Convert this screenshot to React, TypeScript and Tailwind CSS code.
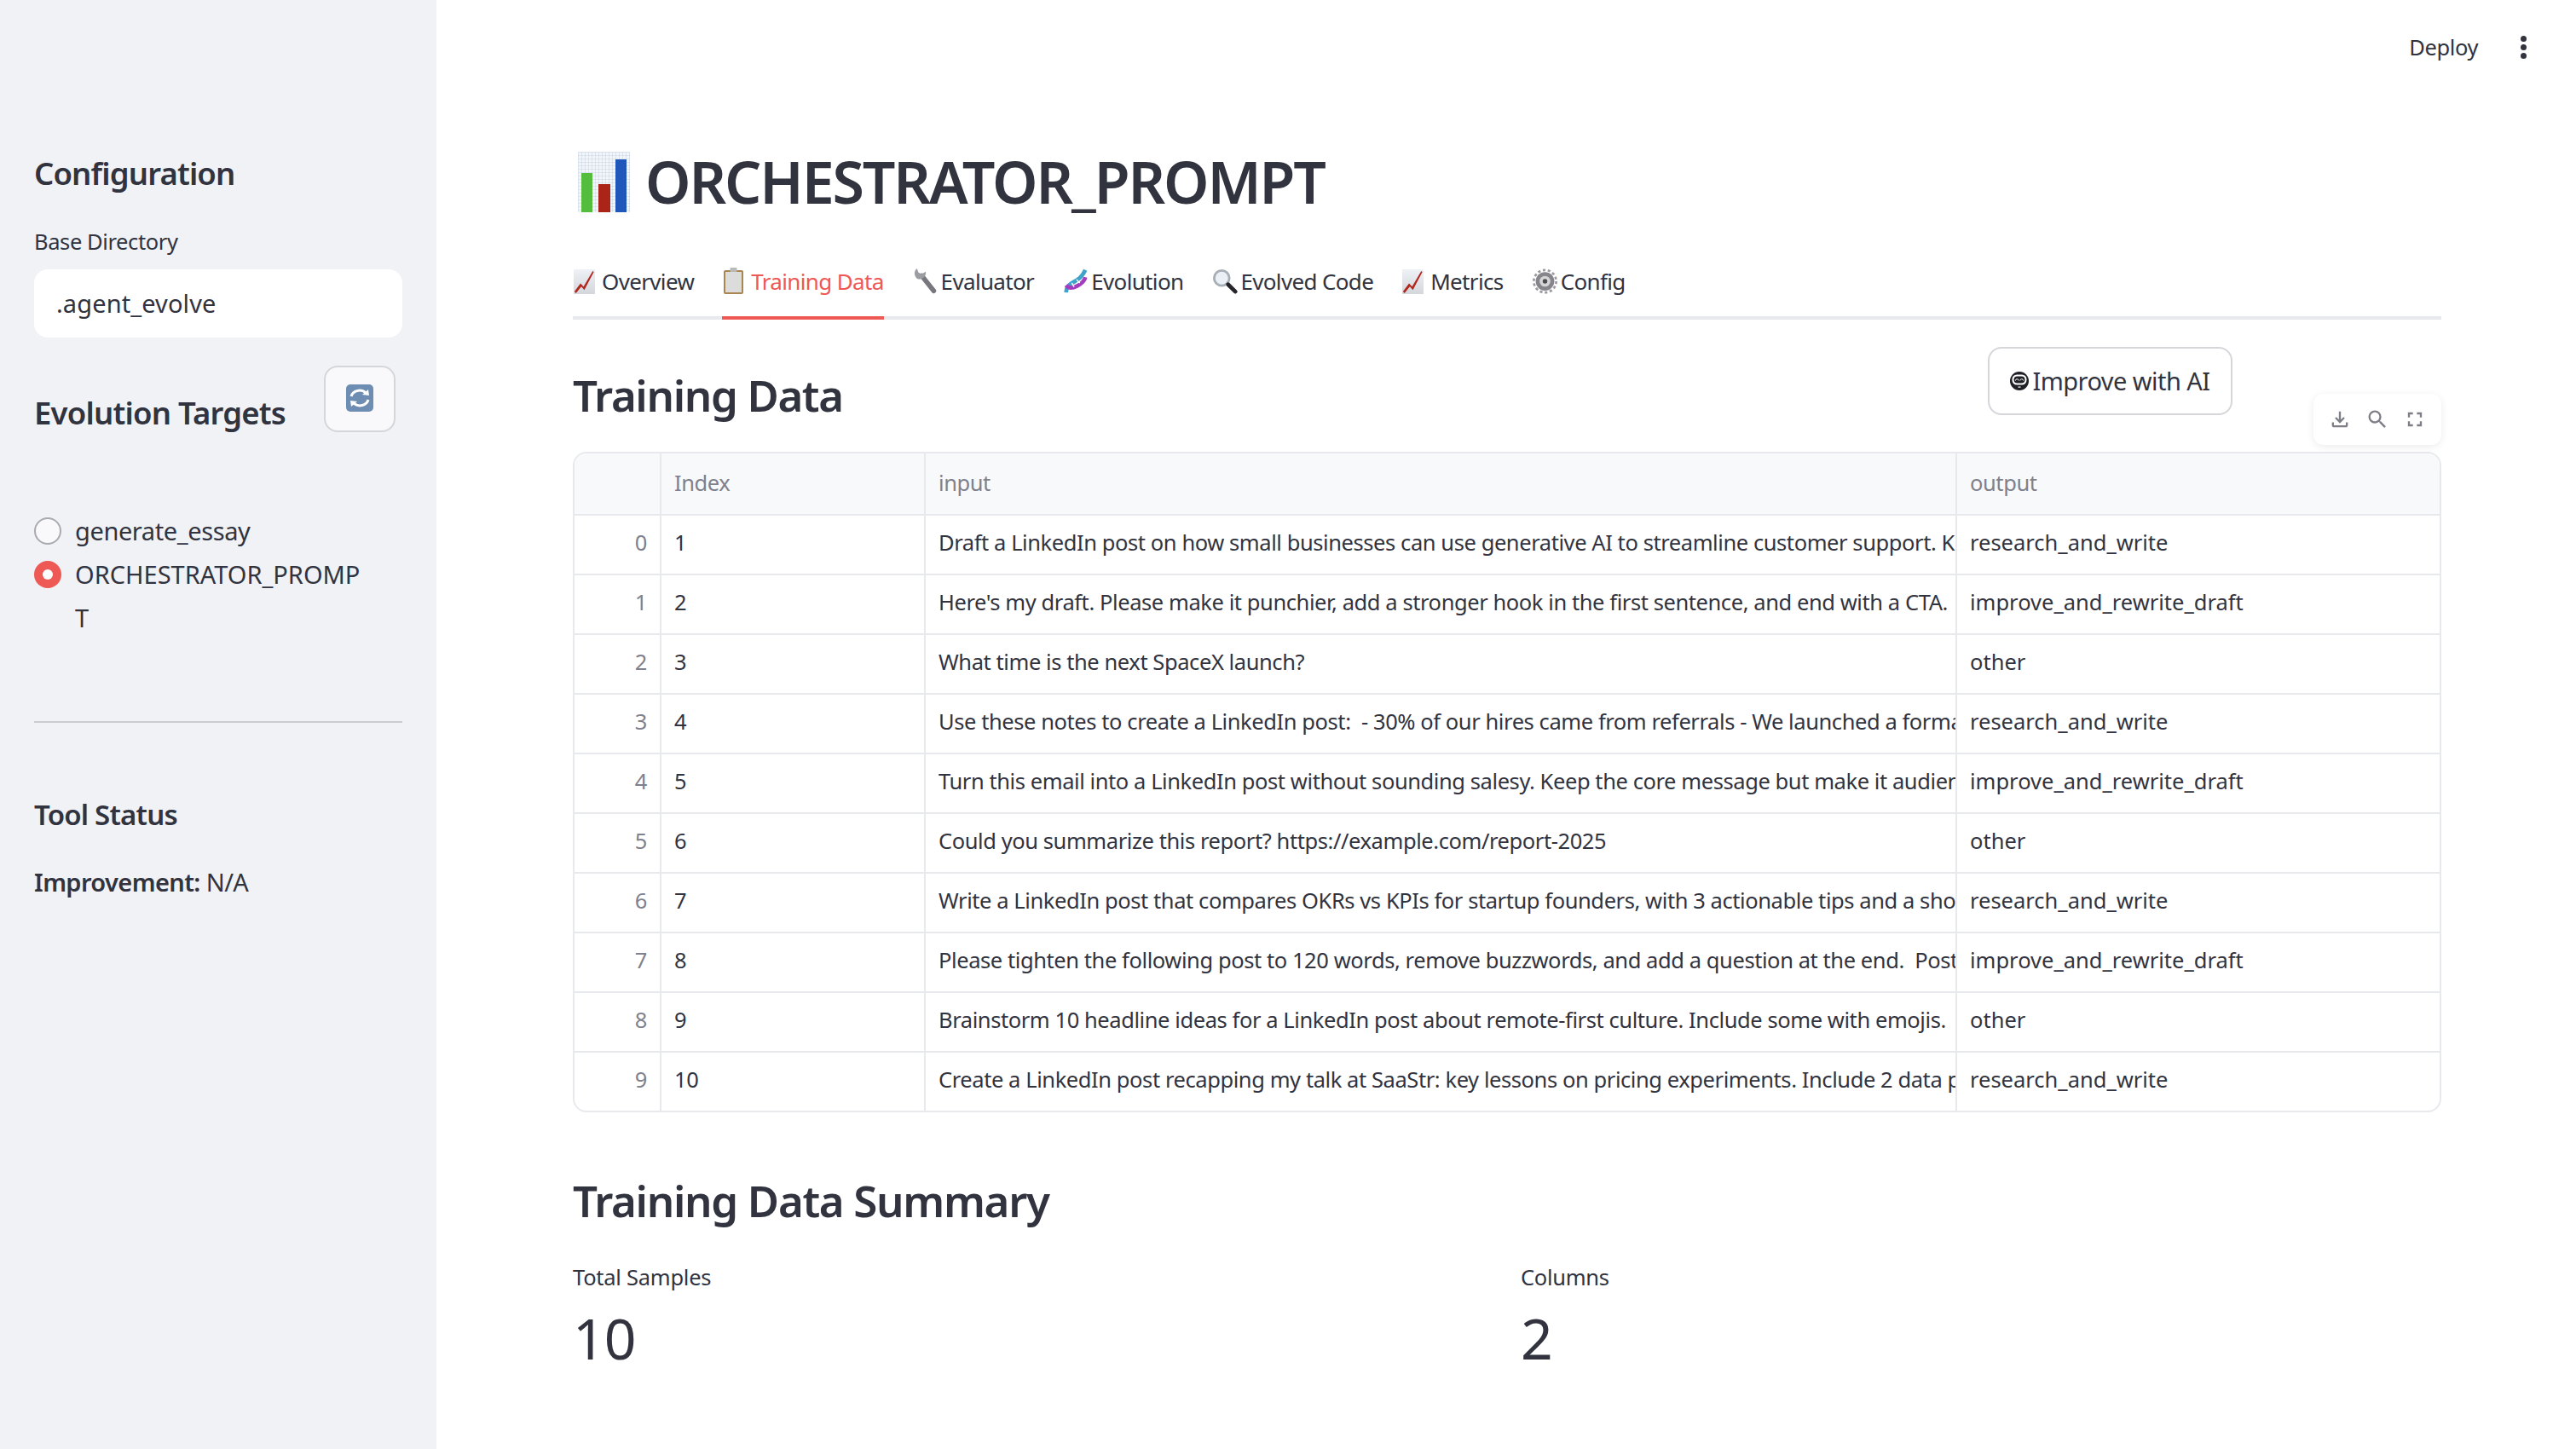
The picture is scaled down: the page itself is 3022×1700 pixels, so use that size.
import React from "react";
import { MdOutlineFileDownload, MdSearch, MdFullscreen } from "react-icons/md";

const Chart = ({ c = "w-[25px] h-[29px]" }: { c?: string }) => (
  <svg viewBox="0 0 28 30" className={c} preserveAspectRatio="none">
    <defs>
      <linearGradient id="cg" x1="0" y1="0" x2="0" y2="1">
        <stop offset="0" stopColor="#eef1f5" />
        <stop offset="1" stopColor="#d3d6da" />
      </linearGradient>
    </defs>
    <rect width="28" height="30" fill="url(#cg)" />
    <path d="M1 27 L9 17 L13 21 L25 2 L26.5 3 L14 25 L10 21 L3 29 Z" fill="#b3261e" />
  </svg>
);
const Clip = () => (
  <svg viewBox="0 0 24 32" className="w-[25px] h-[32px]">
    <rect x="0.5" y="3" width="23" height="28" rx="2" fill="#a9854f" />
    <rect x="2.5" y="5" width="19" height="24" fill="#dcdcdc" />
    <rect x="8" y="0" width="8" height="5" rx="1" fill="#b9b9b9" />
  </svg>
);
const Wrench = () => (
  <svg viewBox="0 0 30 34" className="w-[30px] h-[32px]">
    <path d="M10 10 L25 29" stroke="#77777d" strokeWidth="6" strokeLinecap="round" />
    <path d="M4 1 A8 8 0 0 0 5 14 A8 8 0 0 0 15 5 L10 8 L6 6 Z" fill="#9c9ca3" />
  </svg>
);
const Dna = () => (
  <svg viewBox="0 0 30 34" className="w-[30px] h-[32px]">
    <path d="M3 31 C4 15 18 22 27 3" stroke="#3fa2c8" strokeWidth="5" fill="none" />
    <path d="M3 22 C9 30 25 20 27 12" stroke="#a53bc0" strokeWidth="5" fill="none" />
    <path d="M10 19 L13 24 M16 15 L20 19" stroke="#fff" strokeWidth="1.5" />
  </svg>
);
const Glass = () => (
  <svg viewBox="0 0 32 32" className="w-[30px] h-[30px]">
    <circle cx="12" cy="12" r="9.5" fill="#eaf0f6" stroke="#a8aeb5" strokeWidth="3" />
    <path d="M20 20 L29 29" stroke="#26262a" strokeWidth="5" strokeLinecap="round" />
  </svg>
);
const Gear = () => (
  <svg viewBox="0 0 32 32" className="w-[29px] h-[32px]">
    <circle cx="16" cy="16" r="12" fill="#85858b" />
    <circle cx="16" cy="16" r="14.5" fill="none" stroke="#9a9aa0" strokeWidth="3" strokeDasharray="3.5 3" />
    <circle cx="16" cy="16" r="7" fill="#d5d5d8" />
    <circle cx="16" cy="16" r="3" fill="#4b4b50" />
  </svg>
);
const Refresh = () => (
  <svg viewBox="0 0 32 32" className="w-[32px] h-[32px]">
    <rect width="32" height="32" rx="5" fill="#6d8db3" />
    <path d="M6 14 A10 9 0 0 1 23 10" stroke="#fff" strokeWidth="3" fill="none" />
    <path d="M26 18 A10 9 0 0 1 9 22" stroke="#fff" strokeWidth="3" fill="none" />
    <path d="M19 12 L27 13 L26 6 Z M13 20 L5 19 L6 26 Z" fill="#fff" />
  </svg>
);
const Bars = () => (
  <svg viewBox="0 0 61 71" className="w-[61px] h-[71px] shrink-0">
    <defs>
      <pattern id="g" width="4" height="4" patternUnits="userSpaceOnUse">
        <rect width="4" height="4" fill="#f2f5f9" />
        <path d="M4 0H0V4" fill="none" stroke="#c9d3e0" strokeWidth="1" />
      </pattern>
    </defs>
    <rect width="61" height="71" fill="url(#g)" />
    <rect x="4" y="25" width="13" height="46" fill="#54bd3e" />
    <rect x="24" y="38" width="14" height="33" fill="#aa2418" />
    <rect x="44" y="9" width="13" height="62" fill="#2057bb" />
  </svg>
);
const Bot = () => (
  <svg viewBox="0 0 22 22" className="w-[22px] h-[22px] shrink-0">
    <circle cx="11" cy="11" r="11" fill="#1f1f26" />
    <rect x="2.5" y="3.5" width="17" height="12" rx="5.5" fill="#fff" />
    <rect x="4.5" y="5.5" width="13" height="8" rx="4" fill="#1f1f26" />
    <path d="M6.5 10.5a1.8 1.8 0 0 1 3.6 0M11.9 10.5a1.8 1.8 0 0 1 3.6 0" stroke="#fff" strokeWidth="1" fill="none" />
    <rect x="9.5" y="17.5" width="3" height="1.2" fill="#fff" />
  </svg>
);

const rows: [string, string, string][] = [
  ["1", "Draft a LinkedIn post on how small businesses can use generative AI to streamline customer support. Keep it short and practical for owners", "research_and_write"],
  ["2", "Here's my draft. Please make it punchier, add a stronger hook in the first sentence, and end with a CTA.", "improve_and_rewrite_draft"],
  ["3", "What time is the next SpaceX launch?", "other"],
  ["4", "Use these notes to create a LinkedIn post:  - 30% of our hires came from referrals - We launched a formal program this year", "research_and_write"],
  ["5", "Turn this email into a LinkedIn post without sounding salesy. Keep the core message but make it audience friendly and clear", "improve_and_rewrite_draft"],
  ["6", "Could you summarize this report? https://example.com/report-2025", "other"],
  ["7", "Write a LinkedIn post that compares OKRs vs KPIs for startup founders, with 3 actionable tips and a short closing question", "research_and_write"],
  ["8", "Please tighten the following post to 120 words, remove buzzwords, and add a question at the end.  Post: We are thrilled to announce", "improve_and_rewrite_draft"],
  ["9", "Brainstorm 10 headline ideas for a LinkedIn post about remote-first culture. Include some with emojis.", "other"],
  ["10", "Create a LinkedIn post recapping my talk at SaaStr: key lessons on pricing experiments. Include 2 data points and a takeaway", "research_and_write"],
];

const tabs: [React.ReactNode, string, boolean][] = [
  [<Chart />, "Overview", false],
  [<Clip />, "Training Data", true],
  [<Wrench />, "Evaluator", false],
  [<Dna />, "Evolution", false],
  [<Glass />, "Evolved Code", false],
  [<Chart />, "Metrics", false],
  [<Gear />, "Config", false],
];

const cols = "grid grid-cols-[102px_310px_1210px_1fr]";
const cell = "overflow-hidden whitespace-pre px-[15px] flex items-center border-r-2 border-[#e8e9ec] last:border-r-0";

export default function App() {
  return (
    <div className="flex h-screen w-full overflow-hidden bg-white text-[#31333f] font-['Noto_Sans','Liberation_Sans',sans-serif]">
      <aside className="w-[512px] shrink-0 bg-[#f0f2f6] px-[40px] flex flex-col">
        <h2 className="mt-[178px] h-[50px] flex items-center text-[36.5px] font-semibold tracking-[-0.85px]">Configuration</h2>
        <div className="mt-[40px] h-[30px] flex items-center text-[25.5px] tracking-[-0.4px]">Base Directory</div>
        <div className="mt-[18px] h-[80px] rounded-[16px] bg-white px-[26px] flex items-center text-[29px] tracking-[0.1px]">.agent_evolve</div>
        <div className="mt-[33px] h-[78px] flex items-center justify-between pr-[8px]">
          <h2 className="mt-[32px] text-[36.5px] font-semibold tracking-[-0.8px]">Evolution Targets</h2>
          <button className="w-[84px] h-[78px] rounded-[16px] border-2 border-[#d5d6da] bg-[#f9f9fb] flex justify-center pt-[20px]">
            <Refresh />
          </button>
        </div>
        <div className="mt-[90px] flex flex-col text-[29px] tracking-[-0.4px]">
          <div className="flex items-center gap-[16px] h-[51px]">
            <span className="w-[32px] h-[32px] rounded-full border-2 border-[#a9aaaf] bg-[#f9f9fb]" />
            <span>generate_essay</span>
          </div>
          <div className="flex gap-[16px]">
            <span className="mt-[10px] w-[32px] h-[32px] rounded-full bg-[#ee5855] flex items-center justify-center shrink-0">
              <span className="w-[12px] h-[12px] rounded-full bg-white" />
            </span>
            <span className="leading-[51px] tracking-[0px]">ORCHESTRATOR_PROMP<br />T</span>
          </div>
        </div>
        <div className="mt-[96px] border-t-2 border-[#cbccd0]" />
        <h3 className="mt-[86px] h-[44px] flex items-center text-[33px] font-semibold tracking-[-0.8px]">Tool Status</h3>
        <p className="mt-[35px] text-[29px] tracking-[-0.6px]"><b className="font-semibold">Improvement:</b> N/A</p>
      </aside>

      <main className="flex-1 min-w-0 pl-[160px] pr-[158px] flex flex-col relative">
        <div className="absolute top-0 right-0 h-[110px] pr-[58px] flex items-center gap-[50px]">
          <span className="text-[25.5px] tracking-[-0.4px]">Deploy</span>
          <span className="flex flex-col gap-[3px]">
            <span className="w-[7px] h-[7px] rounded-full bg-[#31333f]" />
            <span className="w-[7px] h-[7px] rounded-full bg-[#31333f]" />
            <span className="w-[7px] h-[7px] rounded-full bg-[#31333f]" />
          </span>
        </div>

        <div className="mt-[163px] h-[100px] flex items-center gap-[18px] pl-[6px]">
          <Bars />
          <h1 className="text-[68px] font-semibold tracking-[-2.1px]">ORCHESTRATOR_PROMPT</h1>
        </div>

        <div className="mt-[32px] h-[80px] flex gap-[33px] border-b-[4px] border-[#e8e9ec]">
          {tabs.map(([ic, t, a]) => (
            <div key={t} className={"flex items-center h-[80px] pb-[6px] text-[26px] tracking-[-0.65px] border-b-[4px] " + (a ? "text-[#ee5855] border-[#ee5855]" : "border-transparent")}>
              <span className="w-[34px] pl-[1px] flex items-center">{ic}</span>
              <span>{t}</span>
            </div>
          ))}
        </div>

        <div className="relative mt-[32px] h-[123px] flex justify-between">
          <h2 className="h-[112px] flex items-center text-[51px] font-semibold tracking-[-1.35px]">Training Data</h2>
          <button className="mr-[245px] w-[287px] h-[80px] rounded-[16px] border-2 border-[#d5d6da] flex items-center justify-center gap-[4px] text-[29px] tracking-[-0.55px]">
            <Bot />
            Improve with AI
          </button>
          <div className="absolute right-0 top-[55px] w-[150px] h-[60px] rounded-[12px] bg-white shadow-[0_2px_10px_rgba(0,0,0,0.08)] flex items-center justify-center gap-[16px] text-[#7d7e86]">
            <MdOutlineFileDownload size={28} />
            <MdSearch size={28} />
            <MdFullscreen size={28} />
          </div>
        </div>

        <div className="rounded-[16px] border-2 border-[#e8e9ec] overflow-hidden text-[25.5px] tracking-[-0.42px]">
          <div className={cols + " h-[71px] bg-[#f8f9fb] text-[#7f818c]"}>
            <div className={cell}></div>
            <div className={cell + " pb-[2px]"}>Index</div>
            <div className={cell + " pb-[2px]"}>input</div>
            <div className={cell + " pb-[2px]"}>output</div>
          </div>
          {rows.map((r, i) => (
            <div key={i} className={cols + " h-[70px] border-t-2 border-[#e8e9ec]"}>
              <div className={cell + " justify-end pb-[6px] text-[#7f818c]"}>{i}</div>
              <div className={cell + " pb-[6px]"}>{r[0]}</div>
              <div className={cell + " pb-[6px] pr-0"}>{r[1]}</div>
              <div className={cell + " pb-[6px] tracking-[0px]"}>{r[2]}</div>
            </div>
          ))}
        </div>

        <h2 className="mt-[70px] h-[66px] flex items-center text-[51px] font-semibold tracking-[-1.3px]">Training Data Summary</h2>
        <div className="mt-[38px] grid grid-cols-[1112px_1fr]">
          <div>
            <div className="text-[25.5px] tracking-[-0.25px]">Total Samples</div>
            <div className="mt-[10px] text-[66px] leading-[84px] tracking-[-1px]">10</div>
          </div>
          <div>
            <div className="text-[25.5px] tracking-[-0.3px]">Columns</div>
            <div className="mt-[10px] text-[66px] leading-[84px] tracking-[-1px]">2</div>
          </div>
        </div>
      </main>
    </div>
  );
}
